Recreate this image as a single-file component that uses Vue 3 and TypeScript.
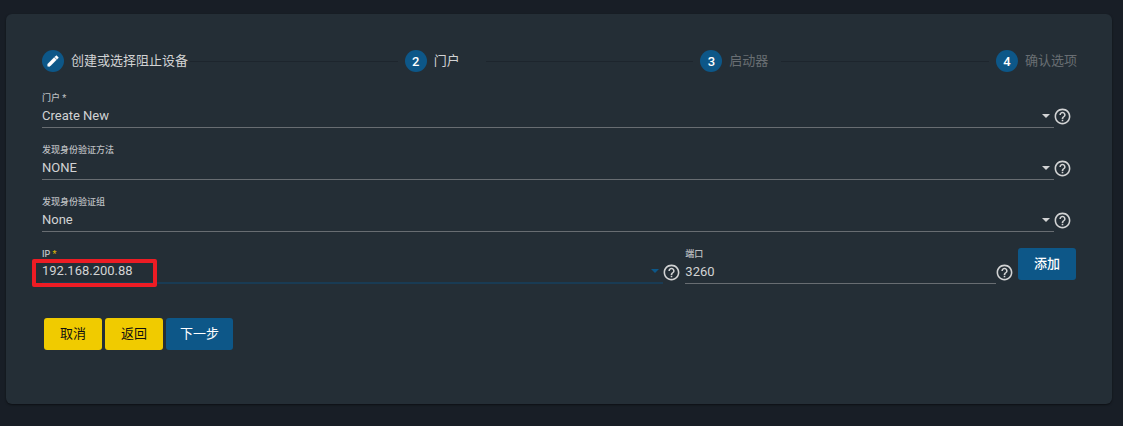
<script setup lang="ts">
import { ref } from 'vue'

interface Step {
  label: string
  done: boolean
  pending: boolean
}

interface SelectField {
  id: string
  label: string
  value: string
  options: string[]
}

const steps: Step[] = [
  { label: '创建或选择阻止设备', done: true, pending: false },
  { label: '门户', done: false, pending: false },
  { label: '启动器', done: false, pending: true },
  { label: '确认选项', done: false, pending: true },
]

const fields = ref<SelectField[]>([
  { id: 'portal', label: '门户 *', value: 'Create New', options: ['Create New'] },
  { id: 'auth-method', label: '发现身份验证方法', value: 'NONE', options: ['NONE', 'CHAP', 'Mutual CHAP'] },
  { id: 'auth-group', label: '发现身份验证组', value: 'None', options: ['None'] },
])

const ip = ref('192.168.200.88')
const port = ref('3260')
const helpPath =
  'M11 18h2v-2h-2v2zm1-16C6.48 2 2 6.48 2 12s4.48 10 10 10 10-4.48 10-10S17.52 2 12 2zm0 18c-4.41 0-8-3.59-8-8s3.59-8 8-8 8 3.59 8 8-3.59 8-8 8zm0-14c-2.21 0-4 1.79-4 4h2c0-1.1.9-2 2-2s2 .9 2 2c0 2-3 1.75-3 5h2c0-2.25 3-2.5 3-5 0-2.21-1.79-4-4-4z'
</script>

<template>
  <main class="card">
    <ol class="stepper">
      <li v-for="(step, i) in steps" :key="step.label" class="step" :class="{ pending: step.pending }">
        <span class="badge">
          <svg v-if="step.done" viewBox="0 0 24 24" width="14" height="14" aria-hidden="true">
            <path d="M3 17.25V21h3.75L17.81 9.94l-3.75-3.75L3 17.25zM20.71 7.04c.39-.39.39-1.02 0-1.41l-2.34-2.34c-.39-.39-1.02-.39-1.41 0l-1.83 1.83 3.75 3.75 1.83-1.83z" />
          </svg>
          <template v-else>{{ i + 1 }}</template>
        </span>
        <span class="step-label">{{ step.label }}</span>
        <span v-if="i < steps.length - 1" class="connector"></span>
      </li>
    </ol>

    <form @submit.prevent>
      <div v-for="field in fields" :key="field.id" class="row">
        <div class="field">
          <label :for="field.id">{{ field.label }}</label>
          <div class="control">
            <select :id="field.id" v-model="field.value">
              <option v-for="option in field.options" :key="option">{{ option }}</option>
            </select>
            <span class="arrow"></span>
          </div>
        </div>
        <button type="button" class="help" aria-label="帮助">
          <svg viewBox="0 0 24 24" width="19" height="19"><path :d="helpPath" /></svg>
        </button>
      </div>

      <div class="row">
        <div class="field wide active">
          <label for="ip">IP <span class="required">*</span></label>
          <div class="control">
            <select id="ip" v-model="ip">
              <option>192.168.200.88</option>
            </select>
            <span class="arrow"></span>
          </div>
          <span class="highlight"></span>
        </div>
        <button type="button" class="help" aria-label="帮助">
          <svg viewBox="0 0 24 24" width="19" height="19"><path :d="helpPath" /></svg>
        </button>
        <div class="field port">
          <label for="port">端口</label>
          <div class="control">
            <input id="port" v-model="port" type="text" inputmode="numeric" />
          </div>
        </div>
        <button type="button" class="help" aria-label="帮助">
          <svg viewBox="0 0 24 24" width="19" height="19"><path :d="helpPath" /></svg>
        </button>
        <button type="button" class="btn primary add">添加</button>
      </div>

      <div class="actions">
        <button type="button" class="btn accent">取消</button>
        <button type="button" class="btn accent">返回</button>
        <button type="submit" class="btn primary next">下一步</button>
      </div>
    </form>
  </main>
</template>

<style>
body {
  background: #181e26;
}
</style>

<style scoped>
* {
  box-sizing: border-box;
}

.card {
  margin: 14px 11px 22px 6px;
  padding: 36px 35px 54px 36px;
  border-radius: 6px;
  background: #242e36;
  box-shadow: 0 1px 2px rgba(0, 0, 0, 0.5);
  color: #d2d3d4;
  font-family: Roboto, "Noto Sans CJK SC", sans-serif;
  font-size: 13px;
}

button,
input,
select {
  font: inherit;
  color: inherit;
}

.stepper {
  display: flex;
  margin: 0 0 21px;
  padding: 0;
  list-style: none;
}

.step {
  display: flex;
  flex: 1 1 auto;
  align-items: center;
  height: 22px;
}

.step:last-child {
  flex: none;
}

.badge {
  display: flex;
  flex: none;
  align-items: center;
  justify-content: center;
  width: 22px;
  height: 22px;
  margin-right: 7px;
  border-radius: 50%;
  background: #0d5788;
  color: #fff;
  font-weight: 500;
}

.badge svg {
  fill: #fff;
  stroke: #fff;
  stroke-width: 1;
}

.step-label {
  min-width: 50px;
  line-height: 20px;
  white-space: nowrap;
}

.pending .step-label {
  color: #696e73;
}

.connector {
  flex: 1;
  height: 1px;
  margin: 0 7px 0 2px;
  background: #1d252d;
}

.row {
  display: flex;
  height: 52px;
}

.field {
  position: relative;
  flex: 1 1 0;
  min-width: 0;
  height: 35px;
}

.field.wide {
  flex-grow: 2;
}

.field label {
  display: block;
  height: 10px;
  color: #bcbfc1;
  font-size: 9px;
  font-weight: 500;
  line-height: 10px;
}

.required {
  color: #d8b30b;
}

.control {
  display: flex;
  align-items: flex-end;
  height: 25px;
  border-bottom: 1px solid #686d72;
}

.control select,
.control input {
  flex: 1;
  min-width: 0;
  height: 20px;
  margin: 0 0 1px;
  padding: 0;
  border: 0;
  outline: 0;
  appearance: none;
  background: transparent;
  line-height: 20px;
}

.arrow {
  width: 0;
  margin: 0 4px 9px 0;
  border: 4px solid transparent;
  border-top-color: #d2d3d4;
  border-bottom: 0;
}

.active .control {
  border-bottom: 2px solid #193b54;
}

.active .arrow {
  border-top-color: #0d5788;
}

.highlight {
  position: absolute;
  top: 10px;
  left: -10px;
  width: 125px;
  height: 28px;
  border: 4px solid #ed1c24;
  border-radius: 2px;
  pointer-events: none;
}

.help {
  display: flex;
  flex: none;
  justify-content: center;
  width: 17px;
  height: 19px;
  margin: 14px 0 0;
  padding: 0;
  border: 0;
  background: transparent;
}

.row > .help:last-child {
  margin-right: 6px;
}

.help svg {
  flex: none;
  fill: #d2d3d4;
}

.port {
  margin-left: 5px;
}

.btn {
  height: 32px;
  padding: 0 16px;
  border: 0;
  border-radius: 3px;
  font-weight: 500;
  line-height: 32px;
}

.add {
  margin: -1px 1px 0 5px;
}

.actions {
  display: flex;
  gap: 3px;
  margin: 17px 0 0 2px;
}

.accent {
  background: #f0cb00;
  color: #101010;
  font-weight: 400;
}

.primary {
  background: #0d5788;
  color: #fff;
}

.next {
  padding: 0 14px;
  font-weight: 400;
}
</style>
